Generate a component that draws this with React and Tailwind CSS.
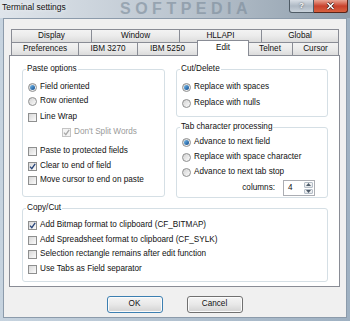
import React from "react";

const font = "font-['Liberation_Sans',Arial,sans-serif]";

function Radio({ on }) {
  return (
    <span className="flex h-[9px] w-[9px] shrink-0 items-center justify-center rounded-full border border-[#8e8f8f] bg-gradient-to-br from-[#d2d2d2] to-[#fcfcfc]">
      {on ? <span className="h-[5px] w-[5px] rounded-full bg-gradient-to-br from-[#78bff0] to-[#0c4a8c]" /> : null}
    </span>
  );
}

function Check({ on, disabled }) {
  return (
    <span
      className={`flex h-[9px] w-[9px] shrink-0 items-center justify-center border ${
        disabled ? "border-[#c4c4c4] bg-[#f4f4f4]" : "border-[#8e8f8f] bg-gradient-to-br from-[#d8d8d8] to-[#fbfbfb]"
      }`}
    >
      {on ? (
        <svg width="7" height="7" viewBox="0 0 7 7">
          <path
            d="M1 3.6 L2.8 5.6 L6.2 0.8"
            fill="none"
            stroke={disabled ? "#a8a8a8" : "#27457a"}
            strokeWidth="1.3"
          />
        </svg>
      ) : null}
    </span>
  );
}

function Option({ kind, on, disabled, label, className = "" }) {
  return (
    <div className={`flex h-[14px] items-center gap-[3px] ${className}`}>
      {kind === "radio" ? <Radio on={on} /> : <Check on={on} disabled={disabled} />}
      <span className={`whitespace-nowrap ${disabled ? "text-[#9a9a9a]" : "text-[#111]"}`}>{label}</span>
    </div>
  );
}

function Group({ title, className = "", children }) {
  return (
    <div className={`relative rounded-[3px] border border-[#d5dfe5] ${className}`}>
      <span className="absolute -top-[6px] left-[3px] bg-white px-[1px] leading-[10px] text-[#111]">{title}</span>
      {children}
    </div>
  );
}

function Tab({ label, w, active }) {
  if (active) {
    return (
      <div
        className={`${w} relative top-[1px] z-10 -mx-[1px] flex h-[16px] items-start justify-center border border-b-0 border-[#898c95] bg-white pt-[1px] text-[#111]`}
      >
        {label}
      </div>
    );
  }
  return (
    <div
      className={`${w} -ml-px flex h-[13px] items-center justify-center border border-b-0 border-[#898c95] bg-gradient-to-b from-[#f3f3f3] via-[#ebebeb] to-[#dcdcdc] text-[#111] first:ml-0`}
    >
      {label}
    </div>
  );
}

function WinButton({ label, primary }) {
  return (
    <button
      className={`flex h-[17px] w-[56px] items-center justify-center rounded-[3px] border bg-gradient-to-b from-[#f4f4f4] via-[#e8e8e8] to-[#d2d2d2] text-[#111] shadow-[inset_0_0_0_1px_#fbfbfb] ${
        primary ? "border-[#3c7fb1]" : "border-[#707070]"
      }`}
    >
      {label}
    </button>
  );
}

export default function App() {
  return (
    <div className={`${font} flex h-[321px] w-[350px] flex-col overflow-hidden bg-gradient-to-r from-[#c6d3df] to-[#9fb1c2] text-[8.2px]`}>
      {/* title bar */}
      <div className="relative flex h-[18px] shrink-0 items-start bg-gradient-to-r from-[#dfe5eb] via-[#bcc6d0] to-[#8f9eac]">
        <span className="pointer-events-none absolute left-[120px] top-[1px] text-[16px] font-bold leading-[16px] tracking-[4.5px] text-[#7b8b9a] opacity-60">
          SOFTPEDIA
        </span>
        <span className="relative ml-[2px] mt-[2px] text-[8.5px] leading-[10px] text-[#111] [text-shadow:0_0_4px_#ffffff]">
          Terminal settings
        </span>
        <div className="relative ml-auto mr-[2px] flex">
          <div className="flex h-[13px] w-[25px] items-center justify-center rounded-bl-[3px] border border-t-0 border-[#4f5b66] bg-gradient-to-b from-[#d8dee5] via-[#aeb9c4] to-[#c9d2db] text-[8px] font-bold text-white [text-shadow:0_0_2px_#333]">
            ?
          </div>
          <div className="flex h-[13px] w-[34px] items-center justify-center rounded-br-[3px] border border-l-0 border-t-0 border-[#5a2418] bg-gradient-to-b from-[#e8a493] via-[#c8412c] to-[#d8613f]">
            <svg width="9" height="8" viewBox="0 0 9 8">
              <path d="M1.5 1 L7.5 7 M7.5 1 L1.5 7" stroke="#3a1a14" strokeWidth="2.8" />
              <path d="M1.5 1 L7.5 7 M7.5 1 L1.5 7" stroke="#ffffff" strokeWidth="1.6" />
            </svg>
          </div>
        </div>
      </div>

      {/* client area */}
      <div className="mx-[3px] mb-[3px] flex flex-1 flex-col border border-[#8c9bab] bg-[#f0f0f0] pl-[5px] pr-[6px] pt-[10px]">
        <div className="flex pl-[2px]">
          <Tab label="Display" w="w-[81px]" />
          <Tab label="Window" w="w-[89px]" />
          <Tab label="HLLAPI" w="w-[83px]" />
          <Tab label="Global" w="w-[78px]" />
        </div>
        <div className="flex h-[13px] items-end pl-[2px]">
          <Tab label="Preferences" w="w-[68px]" />
          <Tab label="IBM 3270" w="w-[60px]" />
          <Tab label="IBM 5250" w="w-[61px]" />
          <Tab label="Edit" w="w-[52px]" active />
          <Tab label="Telnet" w="w-[46px]" />
          <Tab label="Cursor" w="w-[47px]" />
        </div>

        {/* tab page */}
        <div className="flex h-[232px] flex-col border border-[#898c95] bg-white pl-[12px] pr-[11px] pt-[13px]">
          <div className="flex gap-[11px]">
            <Group title="Paste options" className="h-[128px] w-[143px] pl-[5px] pt-[10px]">
              <Option kind="radio" on label="Field oriented" />
              <Option kind="radio" label="Row oriented" />
              <Option kind="check" label="Line Wrap" className="mt-[2px]" />
              <Option kind="check" on disabled label="Don't Split Words" className="ml-[34px] mt-[1px]" />
              <Option kind="check" label="Paste to protected fields" className="mt-[5px]" />
              <Option kind="check" on label="Clear to end of field" className="mt-[1px]" />
              <Option kind="check" label="Move cursor to end on paste" />
            </Group>
            <div className="flex w-[152px] flex-col">
              <Group title="Cut/Delete" className="h-[48px] pl-[5px] pt-[10px]">
                <Option kind="radio" on label="Replace with spaces" />
                <Option kind="radio" label="Replace with nulls" className="mt-[2px]" />
              </Group>
              <Group title="Tab character processing" className="mt-[10px] h-[71px] pl-[5px] pt-[7px]">
                <Option kind="radio" on label="Advance to next field" />
                <Option kind="radio" label="Replace with space character" className="mt-[1px]" />
                <Option kind="radio" label="Advance to next tab stop" className="mt-[1px]" />
                <div className="mt-[1px] flex h-[16px] items-center justify-end gap-[8px] pr-[12px]">
                  <span className="text-[#111]">columns:</span>
                  <div className="flex h-[16px] w-[32px] border border-[#abadb3] bg-white">
                    <span className="flex flex-1 items-center pl-[4px] text-[#111]">4</span>
                    <div className="flex w-[11px] flex-col gap-px p-px">
                      <span className="flex flex-1 items-center justify-center rounded-[1px] border border-[#b5bec8] bg-gradient-to-b from-[#f6f6f6] to-[#e2e6ea]">
                        <svg width="5" height="3" viewBox="0 0 5 3"><path d="M0 3 L2.5 0 L5 3 Z" fill="#4d5a68" /></svg>
                      </span>
                      <span className="flex flex-1 items-center justify-center rounded-[1px] border border-[#b5bec8] bg-gradient-to-b from-[#f6f6f6] to-[#e2e6ea]">
                        <svg width="5" height="3" viewBox="0 0 5 3"><path d="M0 0 L2.5 3 L5 0 Z" fill="#4d5a68" /></svg>
                      </span>
                    </div>
                  </div>
                </div>
              </Group>
            </div>
          </div>

          <Group title="Copy/Cut" className="mt-[10px] h-[74px] pl-[5px] pt-[9px]">
            <Option kind="check" on label="Add Bitmap format to clipboard (CF_BITMAP)" />
            <Option kind="check" label="Add Spreadsheet format to clipboard (CF_SYLK)" className="mt-[1px]" />
            <Option kind="check" label="Selection rectangle remains after edit function" />
            <Option kind="check" label="Use Tabs as Field separator" className="mt-[1px]" />
          </Group>
        </div>

        <div className="mt-[9px] flex justify-center gap-[24px]">
          <WinButton label="OK" primary />
          <WinButton label="Cancel" />
        </div>
      </div>
    </div>
  );
}
